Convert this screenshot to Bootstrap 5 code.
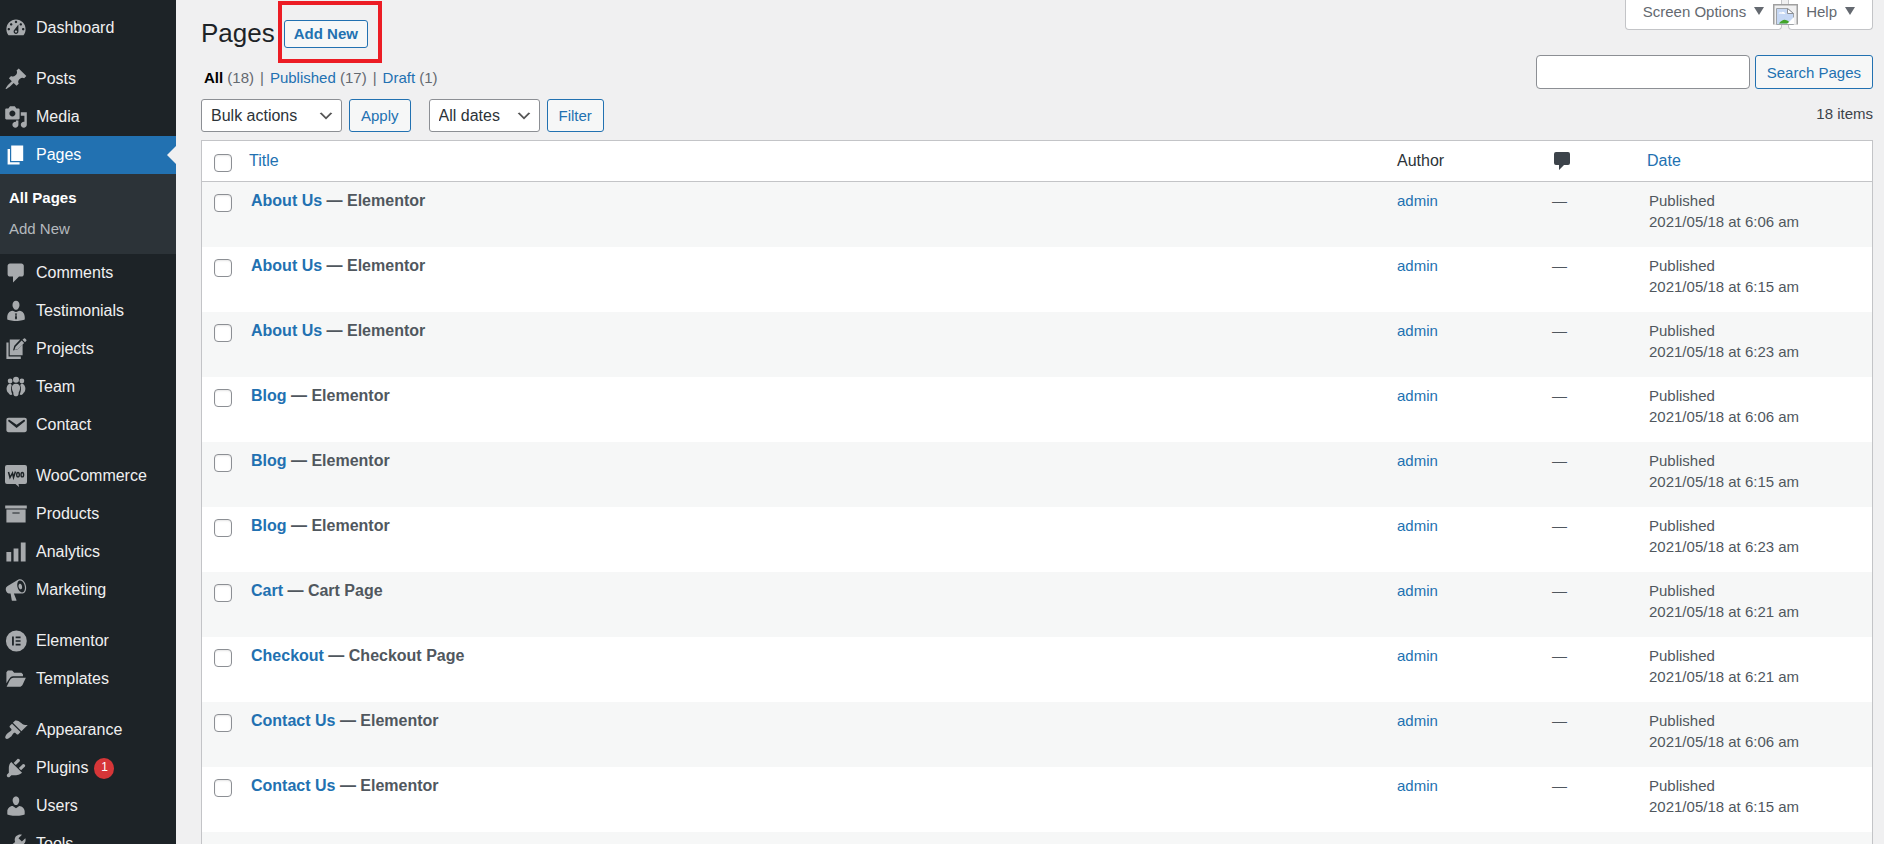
<!DOCTYPE html>
<html lang="en">
<head>
<meta charset="utf-8">
<meta name="viewport" content="width=device-width, initial-scale=1">
<title>Pages</title>
<link href="https://cdn.jsdelivr.net/npm/bootstrap@5.3.0/dist/css/bootstrap.min.css" rel="stylesheet">
<style>
  body { background: #f0f0f1; color: #3c434a; font: 15px/20px "Liberation Sans", Arial, sans-serif; }
  a { color: #2271b1; text-decoration: none; }

  /* admin menu */
  .side { width: 176px; background: #1d2327; padding-top: 9px; }
  .side .nav-link { height: 38px; padding: 0 4px; gap: 8px; color: #f0f0f1; font-size: 16px; line-height: 20px; white-space: nowrap; }
  .side svg { width: 24px; height: 24px; flex: none; fill: #a7aaad; }
  .side .group-start { margin-top: 13px; }
  .side .current { position: relative; background: #2271b1; color: #fff; }
  .side .current svg { fill: #fff; }
  .side .current::after { content: ""; position: absolute; right: 0; top: 10px; border: 9px solid transparent; border-left-width: 0; border-right-color: #f0f0f1; }
  .submenu { background: #2c3338; padding: 8px 9px 10px; }
  .submenu a { display: block; line-height: 31px; color: #b4b9be; }
  .submenu a.here { color: #fff; font-weight: 700; }
  .count { width: 20px; height: 21px; margin-left: -2px; border-radius: 50%; background: #d63638; color: #fff; font-size: 12px; line-height: 19px; text-align: center; }

  /* content */
  main { padding: 0 11px 0 25px; }
  h1 { font-size: 26px; line-height: 26px; font-weight: 400; color: #1d2327; }
  .title-row { padding-top: 20px; gap: 9px; }
  .btn-wp { --bs-btn-color: #2271b1; --bs-btn-bg: #f6f7f7; --bs-btn-border-color: #2271b1; --bs-btn-hover-color: #0a4b78; --bs-btn-hover-bg: #f0f0f1; --bs-btn-hover-border-color: #0a4b78;
    --bs-btn-font-size: 15px; --bs-btn-padding-y: 0; --bs-btn-padding-x: 11px; --bs-btn-border-radius: 3px; line-height: 29px; height: 33px; }
  .btn-new { height: 28px; line-height: 24px; padding: 0 9px; font-weight: 700; }
  .marked { position: relative; line-height: 0; }
  .marked::after { content: ""; position: absolute; inset: -19px -14px -15px -6px; border: 4px solid #ec1c24; pointer-events: none; }
  .views { margin: 20px 0 0 3px; gap: 6px; color: #646970; }
  .views a.here { color: #000; font-weight: 700; }

  .meta-tabs { gap: 6px; }
  .tab-wp { height: 30px; background: #fff; border: 1px solid #c3c4c7; border-top: 0; border-radius: 0 0 4px 4px; color: #646970; padding: 0 17px 6px; line-height: 20px; white-space: nowrap; }
  .caret { display: inline-block; border: 5px solid transparent; border-top: 8px solid #646970; border-bottom: 0; margin-left: 8px; vertical-align: 2px; }
  .broken { position: absolute; left: 148px; top: 4px; }
  .search-row { margin-top: 25px; gap: 5px; }
  .search-row .form-control { width: 214px; height: 34px; border: 1px solid #8c8f94; border-radius: 4px; }
  .search-row .btn { height: 34px; }

  .tools { margin: 10px 0 8px; }
  .tools .btn { --bs-btn-padding-x: 11px; }
  .form-select { width: auto; height: 33px; padding: 0 43px 0 9px; border: 1px solid #8c8f94; border-radius: 3px; color: #2c3338; font-size: 16px; line-height: 30px;
    background: #fff url("data:image/svg+xml,%3Csvg xmlns='http://www.w3.org/2000/svg' viewBox='0 0 20 20'%3E%3Cpath d='M5 6l5 5 5-5 2 1-7 7-7-7 2-1z' fill='%23555'/%3E%3C/svg%3E") no-repeat right 6px center / 18px; }
  .select-dates { padding-right: 38px; margin-left: 11px; }
  .gap-tools { gap: 7px; }
  .item-count { line-height: 29px; }

  .pages { table-layout: fixed; width: 100%; background: #fff; border: 1px solid #c3c4c7; border-collapse: separate; border-spacing: 0; color: #50575e; }
  .pages th { height: 41px; padding: 0 10px; font-size: 16px; font-weight: 400; color: #2c3338; border-bottom: 1px solid #c3c4c7; vertical-align: middle; }
  .pages td { height: 65px; padding: 8px 10px; line-height: 21px; vertical-align: top; }
  .pages tbody tr:nth-child(odd) { background: #f6f7f7; }
  .pages td strong { font-size: 16px; }
  .pages th:nth-child(2) { padding-left: 8px; }
  .pages td:nth-child(5) { padding-left: 12px; }
  .pages td:nth-child(4) { padding-left: 8px; }
  .pages .form-check-input { display: block; width: 18px; height: 18px; margin: 4px 0 0 2px; border: 1px solid #8c8f94; border-radius: 4px; box-shadow: inset 0 1px 2px rgba(0,0,0,.1); }
  .c-check { width: 39px; } .c-author { width: 157px; } .c-com { width: 93px; } .c-date { width: 235px; }
</style>
</head>
<body>
<div class="d-flex vh-100 overflow-hidden">
  <nav class="side flex-shrink-0" aria-label="Main menu">
    <a class="nav-link d-flex align-items-center" href="#"><svg viewBox="0 0 20 20"><path fill-rule="evenodd" d="M3.76 16h12.48c1.1-1.37 1.76-3.11 1.76-5 0-4.42-3.58-8-8-8s-8 3.58-8 8c0 1.89.66 3.63 1.76 5zM10 4c.55 0 1 .45 1 1s-.45 1-1 1-1-.45-1-1 .45-1 1-1zM6 6c.55 0 1 .45 1 1s-.45 1-1 1-1-.45-1-1 .45-1 1-1zm8 0c.55 0 1 .45 1 1s-.45 1-1 1-1-.45-1-1 .45-1 1-1zm-5.370 5.550L12 7v6c0 1.100-.9 2-2 2s-2-.9-2-2c0-.57.24-1.080.63-1.450zM4 10c.55 0 1 .45 1 1s-.45 1-1 1-1-.45-1-1 .45-1 1-1zm12 0c.55 0 1 .45 1 1s-.45 1-1 1-1-.45-1-1 .45-1 1-1zm-5 3c0-.55-.45-1-1-1s-1 .45-1 1 .45 1 1 1 1-.45 1-1z"/></svg>Dashboard</a>
    <a class="nav-link d-flex align-items-center group-start" href="#"><svg viewBox="0 0 20 20"><path d="M10.440 3.020l1.820-1.820 6.360 6.350-1.830 1.820c-1.050-.68-2.480-.57-3.410.36l-.75.75c-.92.93-1.040 2.350-.35 3.410l-1.830 1.820-2.410-2.410-2.800 2.790c-.42.42-3.380 2.710-3.800 2.290s1.860-3.390 2.280-3.810l2.790-2.790L4.100 9.360l1.830-1.820c1.050.69 2.480.57 3.400-.36l.75-.75c.93-.92 1.050-2.350.36-3.410z"/></svg>Posts</a>
    <a class="nav-link d-flex align-items-center" href="#"><svg viewBox="0 0 20 20"><path fill-rule="evenodd" d="M13 11V4c0-.55-.45-1-1-1h-1.670L9 1H5L3.670 3H2c-.55 0-1 .45-1 1v7c0 .55.45 1 1 1h10c.55 0 1-.45 1-1zM7 4.500c1.380 0 2.500 1.120 2.500 2.500S8.380 9.500 7 9.500 4.500 8.380 4.500 7 5.620 4.500 7 4.500zM14 6h5v10.500c0 1.380-1.120 2.500-2.500 2.500S14 17.880 14 16.500s1.120-2.500 2.500-2.500c.17 0 .34.02.5.05V9h-3V6zm-4 8.050V13h2v3.500c0 1.380-1.120 2.500-2.500 2.500S7 17.880 7 16.500 8.120 14 9.500 14c.17 0 .34.02.5.05z"/></svg>Media</a>
    <a class="nav-link d-flex align-items-center current" href="#" aria-current="page"><svg viewBox="0 0 20 20"><path d="M6 15V2h10v13H6zm-1 1h8v2H3V5h2v11z"/></svg>Pages</a>
    <div class="submenu"><a class="here" href="#">All Pages</a><a href="#">Add New</a></div>
    <a class="nav-link d-flex align-items-center" href="#"><svg viewBox="0 0 20 20"><path d="M5 2h9.500c1.100 0 2 .9 2 2v7c0 1.100-.9 2-2 2H12.500l-5 5v-5H5c-1.100 0-2-.9-2-2V4c0-1.100.9-2 2-2z"/></svg>Comments</a>
    <a class="nav-link d-flex align-items-center" href="#"><svg viewBox="0 0 20 20"><path d="M10 1.500c1.800 0 2.900 1.500 2.900 3.500S11.600 9 10 9 7.100 7 7.100 5 8.200 1.500 10 1.500z"/><path fill-rule="evenodd" d="M7 9.800c1 .2 1.700.7 3 1 1.300-.3 2-.8 3-1 2.800.2 4.300 2.800 4.300 5.400v1.800S14 18.300 10 18.300 2.700 17 2.700 17v-1.800c0-2.600 1.500-5.200 4.300-5.400zM9 12l.6 1.300-.5 2.700.9 1.200.9-1.200-.5-2.700L11 12z"/></svg>Testimonials</a>
    <a class="nav-link d-flex align-items-center" href="#"><svg viewBox="0 0 20 20"><path d="M2 4.500h1.800v11.800H14V18.300H2z"/><path d="M4.800 2h8.700L8.600 7.300l-1.100 4 3.900-1L15.500 6v9.300H4.800z"/><path d="M16.600 1.200q.5-.4 1 0l1 1q.5.500 0 1l-1.100 1.200-2.100-2.100zM14.700 3l2.100 2.100-5.200 5-2.900.8.900-2.800z"/></svg>Projects</a>
    <a class="nav-link d-flex align-items-center" href="#"><svg viewBox="0 0 20 20"><circle cx="5.100" cy="5" r="2"/><circle cx="14.900" cy="5" r="2"/><circle cx="10" cy="4" r="2.500"/><path d="M4.200 7.400c1.200-.2 2.100.3 2.200 1.200-.9 2.600-.6 5 .5 7.700-1.300.8-2.800 0-3.100-1.200C1.600 13.300 1.500 9 4.200 7.400zM15.800 7.400c-1.200-.2-2.100.3-2.200 1.200.9 2.600.6 5-.5 7.700 1.300.8 2.800 0 3.100-1.200 2.200-1.800 2.300-6.100-.4-7.700zM10 7.200c2.400 0 3.600 1.500 3.400 3.900-.1 1.600-.7 2.600-1.100 3.300-.1 1.800-.2 3.400-2.300 3.400s-2.200-1.600-2.300-3.400c-.4-.7-1-1.700-1.100-3.300C6.400 8.700 7.600 7.200 10 7.200z"/></svg>Team</a>
    <a class="nav-link d-flex align-items-center" href="#"><svg viewBox="0 0 20 20"><path fill-rule="evenodd" d="M3.870 4h13.250C18.370 4 19 4.590 19 5.790v8.420c0 1.190-.63 1.790-1.880 1.790H3.870c-1.250 0-1.880-.6-1.880-1.790V5.790c0-1.200.63-1.790 1.880-1.790zm6.620 8.600l6.740-5.530c.24-.2.430-.66.130-1.070-.29-.41-.82-.42-1.170-.17l-5.700 3.860L4.800 5.830c-.35-.25-.88-.24-1.170.17-.3.410-.11.870.13 1.070z"/></svg>Contact</a>
    <a class="nav-link d-flex align-items-center group-start" href="#"><svg viewBox="0 0 24 24"><path d="M3 1h18q2 0 2 2v15q0 2-2 2h-6.500l.500 3-3.500-3H3q-2 0-2-2V3q0-2 2-2z"/><path d="M4.500 8l1.500 5.500L8.500 9l1 4.500 2-6" fill="none" stroke="#1d2327" stroke-width="1.500"/><ellipse cx="14" cy="10.700" rx="1.300" ry="2.200" fill="none" stroke="#1d2327" stroke-width="1.400"/><ellipse cx="18.300" cy="10.700" rx="1.300" ry="2.200" fill="none" stroke="#1d2327" stroke-width="1.400"/></svg>WooCommerce</a>
    <a class="nav-link d-flex align-items-center" href="#"><svg viewBox="0 0 20 20"><path fill-rule="evenodd" d="M19 3v2.500H1V3zM2 6.200h16V17H2zM13 9.500V8.700H7v.800z"/></svg>Products</a>
    <a class="nav-link d-flex align-items-center" href="#"><svg viewBox="0 0 20 20"><path d="M18 18V2h-4v16zM12 18V7H8v11zM6 18v-8H2v8z"/></svg>Analytics</a>
    <a class="nav-link d-flex align-items-center" href="#"><svg viewBox="0 0 20 20"><path fill-rule="evenodd" d="M18.150 5.940c.46 1.620.38 3.220-.02 4.480-.42 1.280-1.260 2.180-2.300 2.480-.16.060-.26.060-.4.060-.06.020-.12.020-.18.020-.06.020-.14.020-.22.020h-6.800l2.220 5.500c.02.140-.06.260-.14.340-.08.100-.24.160-.34.160H6.950c-.1 0-.26-.06-.34-.16-.08-.08-.16-.2-.14-.34l-1-5.500H4.250l-.02-.02c-.5.060-1.080-.18-1.540-.62s-.88-1.080-1.060-1.880c-.24-.8-.2-1.560-.02-2.200.18-.62.58-1.080 1.060-1.300l.02-.02 9-5.400c.1-.06.18-.1.240-.16.06-.04.14-.08.24-.12.16-.08.28-.12.5-.18 1.040-.3 2.240.1 3.220.98s1.840 2.240 2.260 3.860zm-2.580 5.980h-.02c.4-.1.740-.34 1.040-.7.580-.7.860-1.760.86-3.040 0-.64-.1-1.300-.28-1.980-.34-1.360-1.020-2.500-1.780-3.240s-1.680-1.100-2.460-.88c-.82.220-1.400.96-1.700 2-.32 1.040-.28 2.360.06 3.720.38 1.360 1 2.500 1.800 3.240.78.740 1.620 1.100 2.480.88zm-2.540-7.080c.22-.04.42-.02.62.040.38.160.76.480 1.020 1s.42 1.200.42 1.780c0 .3-.04.56-.12.8-.18.480-.44.840-.86.940-.34.100-.8-.06-1.140-.4s-.64-.86-.78-1.500c-.18-.62-.12-1.240.02-1.720s.48-.84.820-.94z"/></svg>Marketing</a>
    <a class="nav-link d-flex align-items-center group-start" href="#"><svg viewBox="0 0 20 20"><path fill-rule="evenodd" d="M10.300 1.300a8.700 8.700 0 1 0 0 17.400 8.700 8.700 0 0 0 0-17.400zM6.700 6.300h1.500v7.400H6.700zm3 0h4.100v1.400H9.700zm0 3h4.100v1.400H9.700zm0 3h4.100v1.400H9.700z"/></svg>Elementor</a>
    <a class="nav-link d-flex align-items-center" href="#"><svg viewBox="0 0 20 20"><path d="M2 13.500V4.300L3.200 3h3.600L8.500 4.800h6l1.300 1.300v1.600H7.500C5.200 7.700 4 10.600 2 13.500z"/><path d="M2.200 16.500l2.300-4.800c1-2.100 2-2.800 3.500-2.800h10.200l-2.300 5c-.8 1.800-1.600 2.600-3.300 2.600z"/></svg>Templates</a>
    <a class="nav-link d-flex align-items-center group-start" href="#"><svg viewBox="0 0 20 20"><path d="M14.480 11.060L7.410 3.990l1.500-1.500c.5-.56 2.300-.47 3.510.32 1.210.8 1.430 1.280 2.910 2.100 1.180.64 2.450 1.260 4.450.85zm-.71.71L6.700 4.700 4.930 6.470c-.39.39-.39 1.020 0 1.410l1.060 1.060c.39.39.39 1.030 0 1.420-.6.600-1.430 1.110-2.210 1.690-.35.260-.7.530-1.010.84C1.430 14.230.4 16.080 1.400 17.070c.99 1 2.840-.03 4.180-1.360.31-.31.58-.66.85-1.020.57-.78 1.080-1.610 1.690-2.210.39-.39 1.020-.39 1.410 0l1.060 1.060c.39.39 1.020.39 1.410 0z"/></svg>Appearance</a>
    <a class="nav-link d-flex align-items-center" href="#"><svg viewBox="0 0 20 20"><path d="M13.110 4.360L9.870 7.600 8 5.730l3.240-3.240c.35-.34 1.050-.2 1.560.32.520.51.660 1.210.31 1.550zm-8 1.770l.91-1.120 9.010 9.010-1.190.84c-.71.710-2.630 1.160-3.820 1.160H6.140L4.900 17.260c-.59.59-1.540.59-2.120 0-.59-.58-.59-1.530 0-2.120l1.240-1.240v-3.880c0-1.130.4-3.190 1.090-3.890zm7.260 3.970l3.240-3.240c.34-.35 1.040-.21 1.550.31.520.51.660 1.210.31 1.550l-3.240 3.250z"/></svg>Plugins <span class="count">1</span></a>
    <a class="nav-link d-flex align-items-center" href="#"><svg viewBox="0 0 20 20"><path d="M10 9.250c-2.270 0-2.730-3.440-2.730-3.440C7 4.020 7.820 2 9.970 2c2.160 0 2.980 2.020 2.710 3.810 0 0-.41 3.440-2.680 3.440zm0 2.570L12.720 10c2.390 0 4.520 2.330 4.520 4.530v2.490s-3.650 1.130-7.240 1.130c-3.650 0-7.240-1.130-7.240-1.130v-2.490c0-2.250 1.940-4.480 4.470-4.480z"/></svg>Users</a>
    <a class="nav-link d-flex align-items-center" href="#"><svg viewBox="0 0 20 20"><path d="M16.680 9.770c-1.340 1.340-3.300 1.670-4.950.99l-5.410 6.520c-.99.990-2.590.990-3.580 0s-.99-2.590 0-3.570l6.520-5.420c-.68-1.650-.35-3.610.99-4.950 1.280-1.280 3.120-1.620 4.720-1.060l-2.890 2.890 2.820 2.820 2.860-2.870c.53 1.580.18 3.390-1.080 4.650z"/></svg>Tools</a>
  </nav>

  <main class="flex-grow-1">
    <div class="d-flex justify-content-between">
      <div>
        <div class="title-row d-flex">
          <h1 class="m-0">Pages</h1>
          <div class="marked"><button type="button" class="btn btn-wp btn-new">Add New</button></div>
        </div>
        <div class="views d-flex">
          <span><a class="here" href="#">All</a> (18)</span><span>|</span>
          <span><a href="#">Published</a> (17)</span><span>|</span>
          <span><a href="#">Draft</a> (1)</span>
        </div>
      </div>
      <div class="d-flex flex-column align-items-end">
        <div class="meta-tabs d-flex position-relative">
          <button type="button" class="tab-wp">Screen Options<span class="caret"></span></button>
          <svg class="broken" width="25" height="21" viewBox="0 0 25 21" aria-hidden="true"><path d="M0 0h25v20.500H0z" fill="#a0a0a0"/><path d="M1.500 1.500h22v19h-22z" fill="#f0f0f1"/><path d="M3.500 4.500h11l6 5V20.500h-17z" fill="#c6d8f5" stroke="#a0a4a8"/><path d="M14.500 4.500v5h6z" fill="#fff" stroke="#8c8f94"/><path d="M5.500 9.500q1-2 3-1 2-2 4 1.500z" fill="#fff"/><path d="M6 19.500q5-7 11-1l-2 1z" fill="#43a52a"/><path d="M14 20l7-7v7z" fill="#fff"/></svg>
          <button type="button" class="tab-wp">Help<span class="caret"></span></button>
        </div>
        <form class="search-row d-flex" onsubmit="return false">
          <input class="form-control" type="search" aria-label="Search Pages">
          <button type="submit" class="btn btn-wp">Search Pages</button>
        </form>
      </div>
    </div>

    <div class="tools d-flex justify-content-between">
      <div class="d-flex gap-tools">
        <select class="form-select" aria-label="Bulk actions"><option>Bulk actions</option></select>
        <button type="button" class="btn btn-wp">Apply</button>
        <select class="form-select select-dates" aria-label="Filter by date"><option>All dates</option></select>
        <button type="button" class="btn btn-wp">Filter</button>
      </div>
      <span class="item-count">18 items</span>
    </div>

    <table class="pages">
      <colgroup><col class="c-check"><col><col class="c-author"><col class="c-com"><col class="c-date"></colgroup>
      <thead>
        <tr><th><input class="form-check-input" type="checkbox" aria-label="Select all"></th><th><a href="#">Title</a></th><th>Author</th><th><svg class="d-block" width="16" height="18" viewBox="0 0 16 18" role="img" aria-label="Comments"><path d="M2 0h12q2 0 2 2v9q0 2-2 2h-4l-5 5v-5H2q-2 0-2-2V2q0-2 2-2z" fill="#3c434a"/></svg></th><th><a href="#">Date</a></th></tr>
      </thead>
      <tbody>
        <tr><td><input class="form-check-input" type="checkbox" aria-label="Select About Us"></td><td><strong><a href="#">About Us</a> — Elementor</strong></td><td><a href="#">admin</a></td><td>—</td><td>Published<br>2021/05/18 at 6:06 am</td></tr>
        <tr><td><input class="form-check-input" type="checkbox" aria-label="Select About Us"></td><td><strong><a href="#">About Us</a> — Elementor</strong></td><td><a href="#">admin</a></td><td>—</td><td>Published<br>2021/05/18 at 6:15 am</td></tr>
        <tr><td><input class="form-check-input" type="checkbox" aria-label="Select About Us"></td><td><strong><a href="#">About Us</a> — Elementor</strong></td><td><a href="#">admin</a></td><td>—</td><td>Published<br>2021/05/18 at 6:23 am</td></tr>
        <tr><td><input class="form-check-input" type="checkbox" aria-label="Select Blog"></td><td><strong><a href="#">Blog</a> — Elementor</strong></td><td><a href="#">admin</a></td><td>—</td><td>Published<br>2021/05/18 at 6:06 am</td></tr>
        <tr><td><input class="form-check-input" type="checkbox" aria-label="Select Blog"></td><td><strong><a href="#">Blog</a> — Elementor</strong></td><td><a href="#">admin</a></td><td>—</td><td>Published<br>2021/05/18 at 6:15 am</td></tr>
        <tr><td><input class="form-check-input" type="checkbox" aria-label="Select Blog"></td><td><strong><a href="#">Blog</a> — Elementor</strong></td><td><a href="#">admin</a></td><td>—</td><td>Published<br>2021/05/18 at 6:23 am</td></tr>
        <tr><td><input class="form-check-input" type="checkbox" aria-label="Select Cart"></td><td><strong><a href="#">Cart</a> — Cart Page</strong></td><td><a href="#">admin</a></td><td>—</td><td>Published<br>2021/05/18 at 6:21 am</td></tr>
        <tr><td><input class="form-check-input" type="checkbox" aria-label="Select Checkout"></td><td><strong><a href="#">Checkout</a> — Checkout Page</strong></td><td><a href="#">admin</a></td><td>—</td><td>Published<br>2021/05/18 at 6:21 am</td></tr>
        <tr><td><input class="form-check-input" type="checkbox" aria-label="Select Contact Us"></td><td><strong><a href="#">Contact Us</a> — Elementor</strong></td><td><a href="#">admin</a></td><td>—</td><td>Published<br>2021/05/18 at 6:06 am</td></tr>
        <tr><td><input class="form-check-input" type="checkbox" aria-label="Select Contact Us"></td><td><strong><a href="#">Contact Us</a> — Elementor</strong></td><td><a href="#">admin</a></td><td>—</td><td>Published<br>2021/05/18 at 6:15 am</td></tr>
        <tr><td></td><td></td><td></td><td></td><td></td></tr>
      </tbody>
    </table>
  </main>
</div>
<script src="https://cdn.jsdelivr.net/npm/bootstrap@5.3.0/dist/js/bootstrap.bundle.min.js"></script>
</body>
</html>
